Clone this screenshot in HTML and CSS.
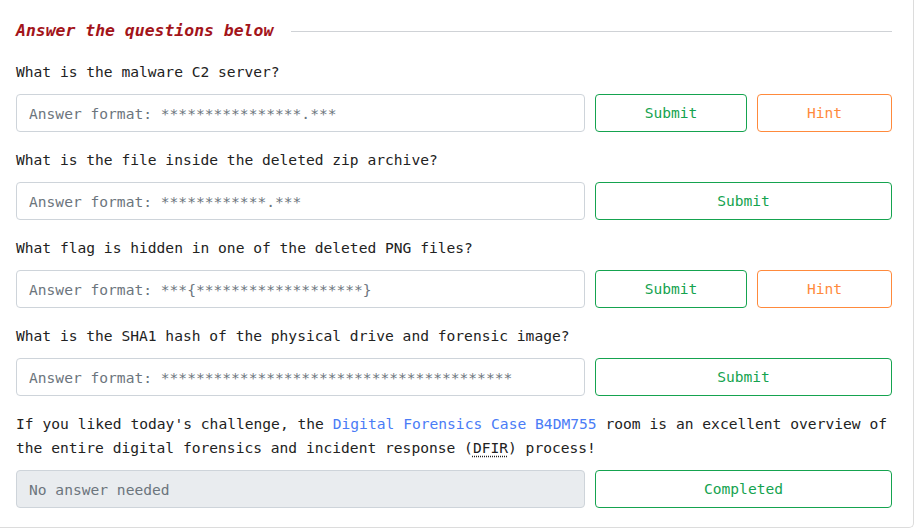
FILE: index.html
```html
<!DOCTYPE html>
<html lang="en">
<head>
<meta charset="utf-8">
<title>Answer the questions below</title>
<link rel="stylesheet" href="styles.css">
</head>
<body>
<div class="card">
  <div class="heading">
    <h2 class="heading-title">Answer the questions below</h2>
    <span class="heading-rule"></span>
  </div>

  <div class="question">
    <p class="label">What is the malware C2 server?</p>
    <div class="row">
      <input class="answer" type="text" placeholder="Answer format: ****************.***">
      <div class="actions two">
        <button class="btn btn-submit">Submit</button>
        <button class="btn btn-hint">Hint</button>
      </div>
    </div>
  </div>

  <div class="question">
    <p class="label">What is the file inside the deleted zip archive?</p>
    <div class="row">
      <input class="answer" type="text" placeholder="Answer format: ************.***">
      <div class="actions">
        <button class="btn btn-submit">Submit</button>
      </div>
    </div>
  </div>

  <div class="question">
    <p class="label">What flag is hidden in one of the deleted PNG files?</p>
    <div class="row">
      <input class="answer" type="text" placeholder="Answer format: ***{*******************}">
      <div class="actions two">
        <button class="btn btn-submit">Submit</button>
        <button class="btn btn-hint">Hint</button>
      </div>
    </div>
  </div>

  <div class="question">
    <p class="label">What is the SHA1 hash of the physical drive and forensic image?</p>
    <div class="row">
      <input class="answer" type="text" placeholder="Answer format: ****************************************">
      <div class="actions">
        <button class="btn btn-submit">Submit</button>
      </div>
    </div>
  </div>

  <div class="question">
    <p class="label text">If you liked today's challenge, the <a class="link" href="#">Digital Forensics Case B4DM755</a> room is an excellent overview of the entire digital forensics and incident response (<abbr class="abbr" title="Digital Forensics and Incident Response">DFIR</abbr>) process!</p>
    <div class="row">
      <input class="answer disabled" type="text" placeholder="No answer needed" disabled>
      <div class="actions">
        <button class="btn btn-submit">Completed</button>
      </div>
    </div>
  </div>
</div>
</body>
</html>
```

FILE: styles.css
```css
* { box-sizing: border-box; }

html, body {
  margin: 0;
  padding: 0;
  background: #ffffff;
}

body {
  font-family: "DejaVu Sans Mono", "Liberation Mono", monospace;
  font-size: 14.6px;
  color: #212529;
  width: 915px;
  height: 529px;
  overflow: hidden;
}

.card {
  width: 914px;
  height: 528px;
  border-right: 1px solid #dcdcdc;
  border-bottom: 1px solid #dcdcdc;
  border-bottom-right-radius: 5px;
  padding: 19px 21px 0 16px;
}

.heading {
  display: flex;
  align-items: center;
  gap: 18px;
  height: 24px;
  margin-bottom: 17px;
}

.heading-title {
  margin: 0;
  font-size: 16.45px;
  font-weight: bold;
  font-style: italic;
  color: #a3141a;
  line-height: 24px;
  white-space: nowrap;
}

.heading-rule {
  flex: 1;
  height: 1px;
  background: #cfd2d6;
}

.question {
  margin-bottom: 16px;
}

.label {
  margin: 0 0 10px 0;
  line-height: 24px;
  color: #222222;
}

.text {
  text-align: justify;
  padding-right: 5px;
}

.link {
  color: #4a7cf6;
  text-decoration: none;
}

.abbr {
  text-decoration: underline dotted;
  text-underline-offset: 3px;
}

.row {
  display: grid;
  grid-template-columns: 569px 1fr;
  gap: 10px;
}

.answer {
  height: 38px;
  border: 1px solid #ced4da;
  border-radius: 4px;
  padding: 0 12px;
  font-family: inherit;
  font-size: 14.6px;
  color: #495057;
  background: #ffffff;
  outline: none;
}

.answer::placeholder {
  color: #6c757d;
  opacity: 1;
}

.answer.disabled {
  background: #e9ecef;
}

.actions {
  display: grid;
  grid-template-columns: 1fr;
}

.actions.two {
  grid-template-columns: 152px 1fr;
  gap: 10px;
}

.btn {
  height: 38px;
  border-radius: 4px;
  background: #ffffff;
  font-family: inherit;
  font-size: 14.6px;
  padding: 0 0 2px 0;
  cursor: pointer;
}

.btn-submit {
  border: 1px solid #15a34f;
  color: #15a34f;
}

.btn-hint {
  border: 1px solid #ff8a3c;
  color: #ff8a3c;
}
```
